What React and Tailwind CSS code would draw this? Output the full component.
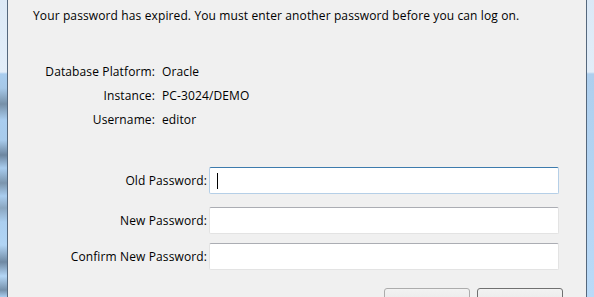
export default function App() {
  return (
    <div className="flex h-[297px] w-[594px] overflow-hidden font-['Open_Sans','Noto_Sans',sans-serif] text-[12px] tracking-[0.12px] text-black">
      <div className="w-[7px] shrink-0 bg-[linear-gradient(180deg,#dce9f6_0px,#e3eef9_72px,#a9cdef_74px,#a6c8e8_88px,#7690a8_104px,#a9cdef_120px,#a8cbec_140px,#6d86a0_155px,#a8ccee_168px,#7b95ad_183px,#a9cdef_196px,#8aa6c0_208px,#abcff0_222px,#b1d4f4_245px,#6f89a3_262px,#b3d6f6_276px,#7590aa_290px,#a9cdef_297px)]" />
      <div className="w-px shrink-0 bg-[#55687d]" />
      <div className="flex min-w-0 flex-1 flex-col bg-[#f0f0f0]">
        <p className="pl-[25px] pt-[8px] leading-[16px]">
          Your password has expired. You must enter another password before you can log on.
        </p>

        <dl className="mt-[36px] grid grid-cols-[147px_1fr] gap-x-[7px]">
          <InfoRow label="Database Platform:" value="Oracle" />
          <InfoRow label="Instance:" value="PC-3024/DEMO" />
          <InfoRow label="Username:" value="editor" />
        </dl>

        <div className="mt-[35px] flex flex-col">
          <Field label="Old Password:" focused />
          <div className="h-[13px]" />
          <Field label="New Password:" />
          <div className="h-[9px]" />
          <Field label="Confirm New Password:" />
        </div>

        <div className="mt-[18px] flex justify-end gap-[7px] pr-[23px]">
          <button className="h-[23px] w-[86px] shrink-0 rounded-[3px] border border-[#acacac] bg-[linear-gradient(180deg,#f2f2f2,#e6e6e6)]" />
          <button className="h-[23px] w-[86px] shrink-0 rounded-[3px] border border-[#707070] bg-[linear-gradient(180deg,#f2f2f2,#e6e6e6)]" />
        </div>
      </div>
      <div className="w-px shrink-0 bg-[#55687d]" />
      <div className="w-[7px] shrink-0 bg-[linear-gradient(180deg,#dae8f6_0px,#e2edf8_72px,#aecfee_74px,#b9daf8_297px)]" />
    </div>
  );
}

function InfoRow({ label, value }) {
  return (
    <>
      <dt className="text-right leading-[24px]">{label}</dt>
      <dd className="leading-[24px]">{value}</dd>
    </>
  );
}

function Field({ label, focused }) {
  return (
    <div className="flex h-[27px] items-center">
      <label className="w-[201px] shrink-0 pr-[2px] text-right">{label}</label>
      <div
        className={
          focused
            ? 'flex h-[27px] w-[350px] items-center rounded-[2px] border border-[#3d7bad] border-b-[#b5cfe7] border-l-[#b5cfe7] border-r-[#b5cfe7] bg-white pl-[7px]'
            : 'h-[27px] w-[350px] rounded-[2px] border border-[#e3e3e3] border-t-[#abadb3] bg-white'
        }
      >
        {focused && <span className="h-[16px] w-px bg-black" />}
      </div>
    </div>
  );
}
